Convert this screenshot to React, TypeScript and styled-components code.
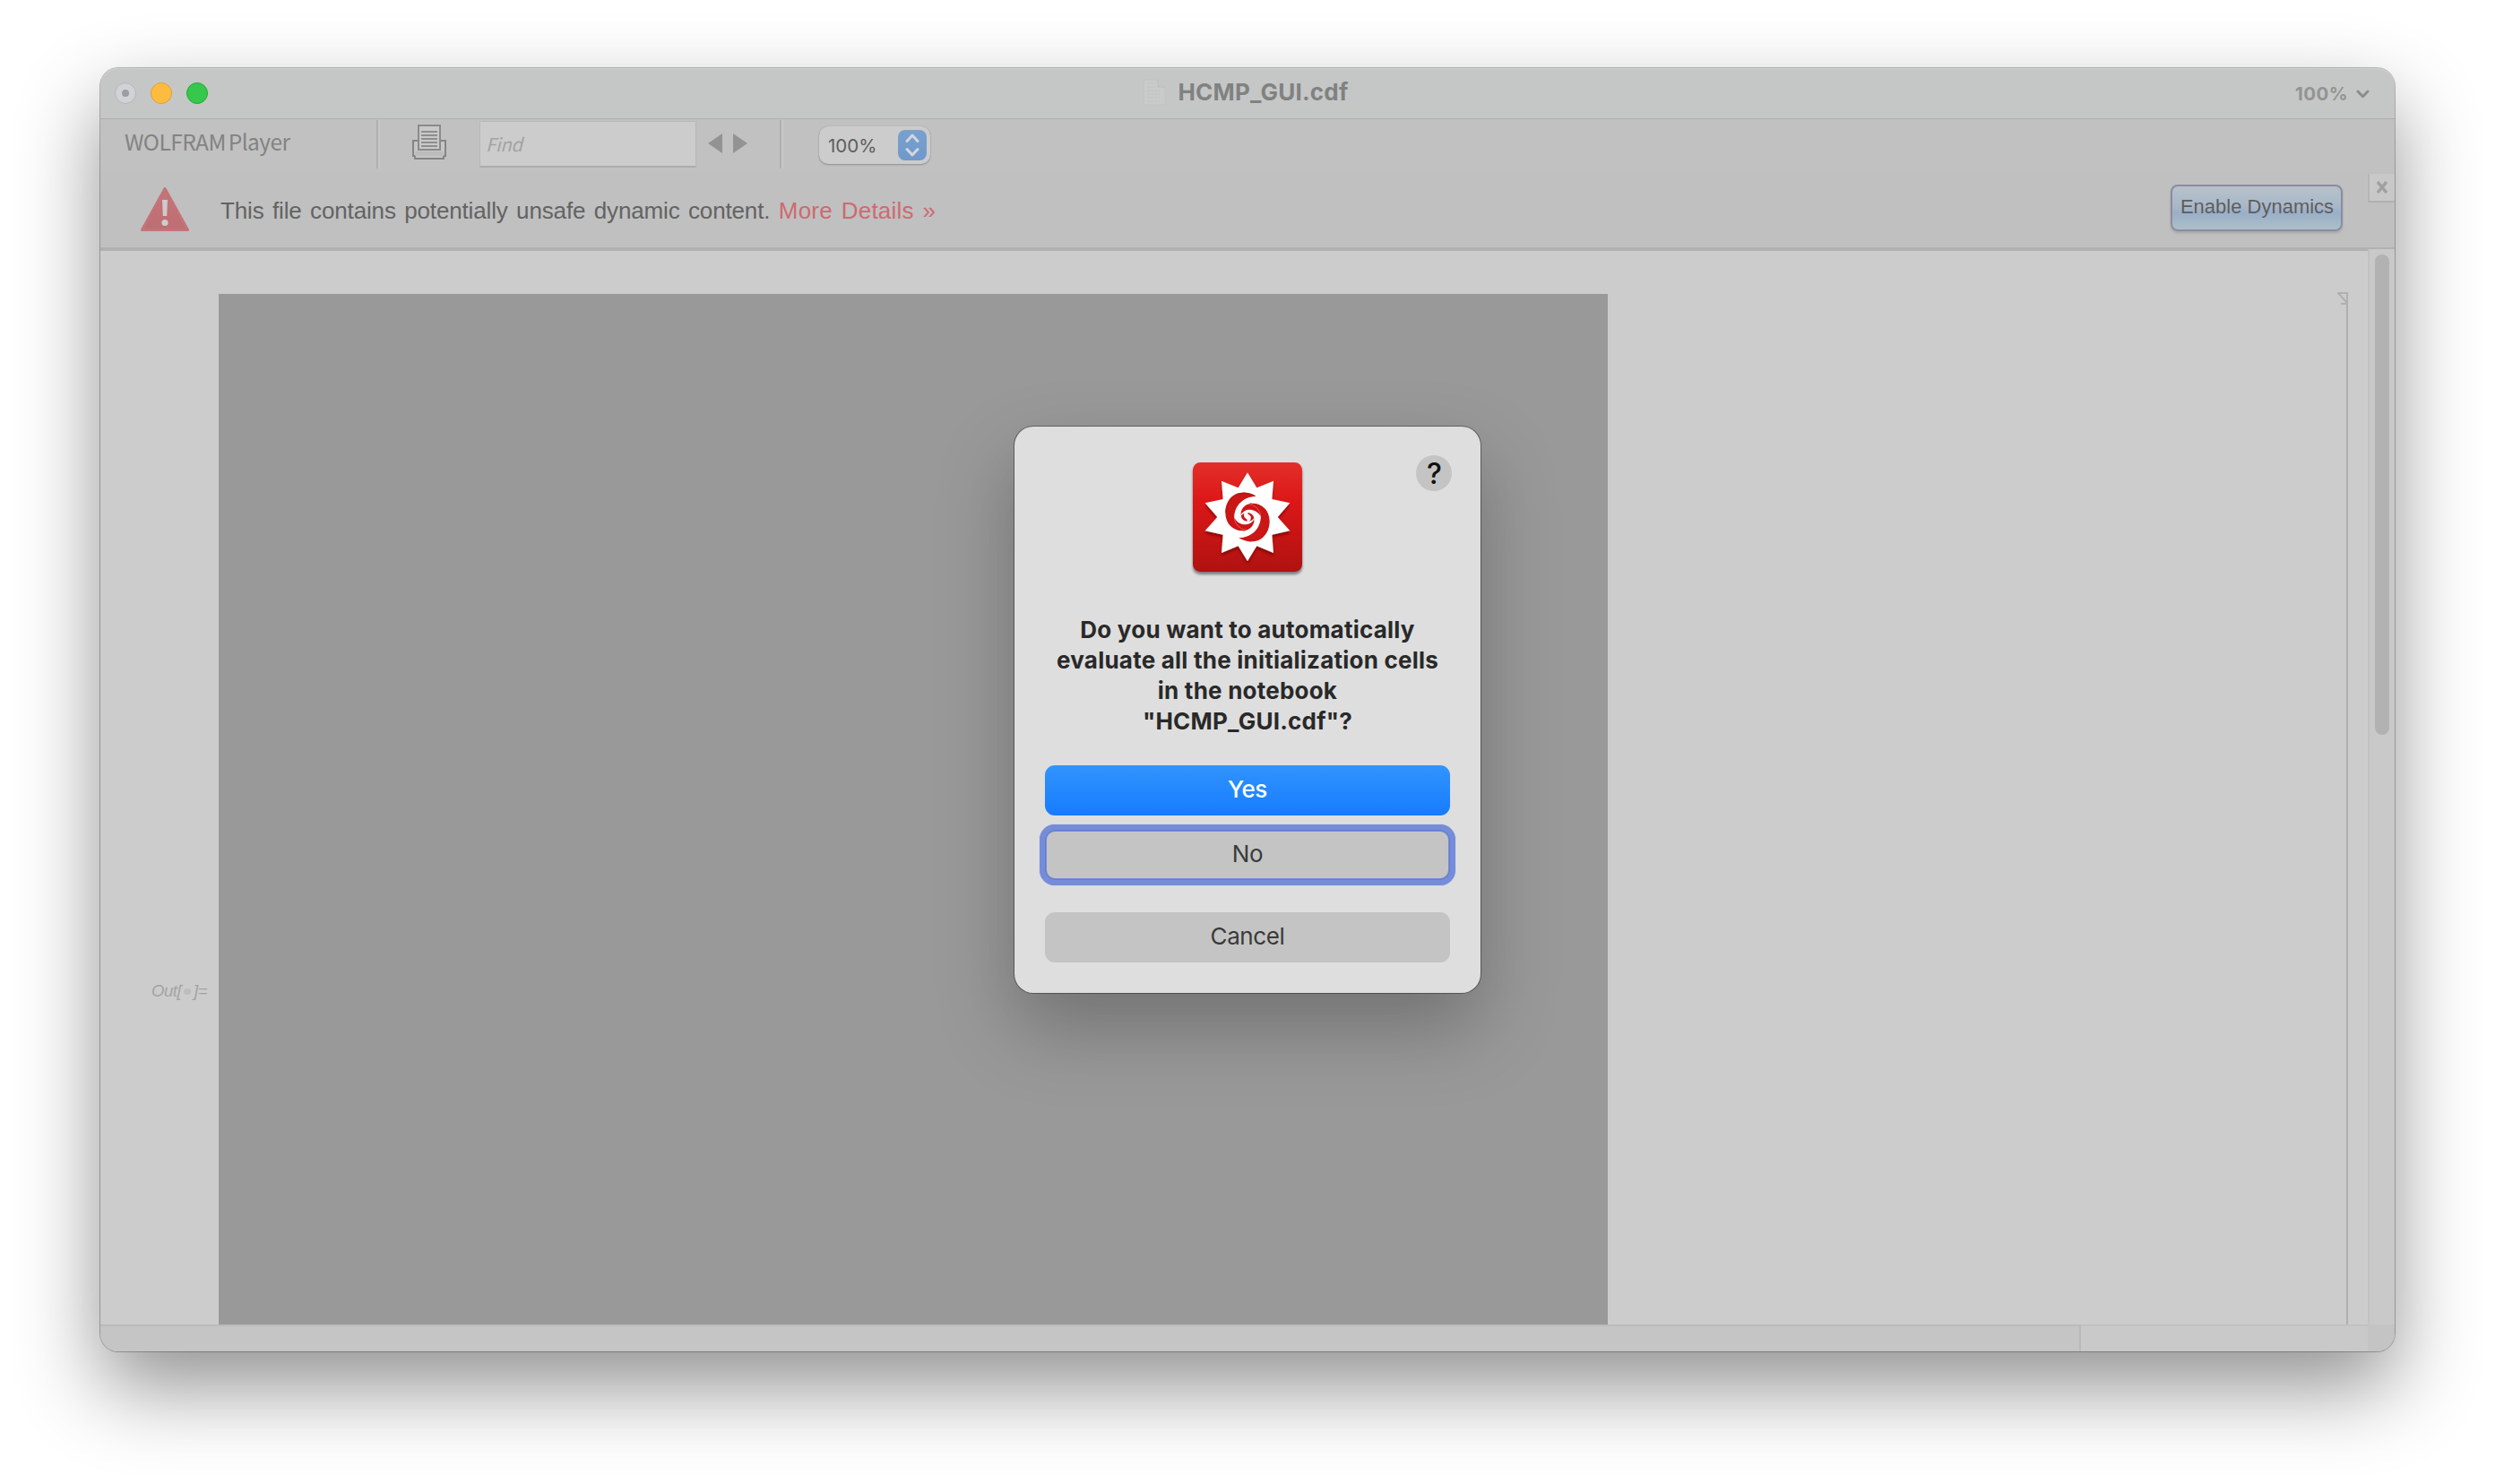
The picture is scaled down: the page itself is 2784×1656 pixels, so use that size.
import React from "react";
import styled, { createGlobalStyle, css } from "styled-components";

const Global = createGlobalStyle`
  *, *::before, *::after { box-sizing: border-box; }
  body { margin: 0; background: #fff; }
  button, input { font: inherit; margin: 0; }
  svg { display: block; flex: none; }
`;

const sans = `Inter, "Liberation Sans", sans-serif`;
const humanist = `"Noto Sans CJK SC", "Noto Sans", sans-serif`;
const grotesque = `"Liberation Sans", Arial, sans-serif`;

const Desktop = styled.div`
  width: 2784px;
  height: 1656px;
  padding: 76px 112px 148px;
  overflow: hidden;
  background: #fff;
`;

const Window = styled.main`
  position: relative;
  display: flex;
  flex-direction: column;
  width: 2560px;
  height: 1432px;
  border-radius: 20px;
  background: #ccc;
  box-shadow: 0 0 0 1px rgba(0, 0, 0, 0.26), 0 40px 92px rgba(0, 0, 0, 0.43);
`;

const TitleBar = styled.header`
  display: grid;
  grid-template-columns: 1fr auto 1fr;
  align-items: center;
  height: 57px;
  flex: none;
  padding: 0 28px 0 16px;
  border-radius: 20px 20px 0 0;
  border-bottom: 1px solid #adafae;
  background: #c5c7c6;
  box-shadow: inset 0 1px 0 #d0d2d1;
  font-family: ${sans};
`;

const Lights = styled.div`
  display: flex;
  gap: 16px;
`;

const Light = styled.span<{ $fill: string; $edge: string }>`
  display: grid;
  place-items: center;
  width: 24px;
  height: 24px;
  border-radius: 50%;
  border: 1px solid ${(p) => p.$edge};
  background: ${(p) => p.$fill};
`;

const EditedDot = styled.i`
  width: 8px;
  height: 8px;
  border-radius: 50%;
  background: #9c9da0;
`;

const Title = styled.h1`
  display: flex;
  align-items: center;
  gap: 13px;
  margin: 0;
  padding: 0 0 2px 8px;
  font-size: 26px;
  line-height: 32px;
  font-weight: 700;
  color: #808281;
  letter-spacing: 0.2px;
`;

const Magnification = styled.div`
  display: flex;
  align-items: center;
  justify-content: flex-end;
  gap: 9px;
  padding-top: 1px;
  font-size: 20.5px;
  font-weight: 700;
  letter-spacing: 0.4px;
  color: #929493;
`;

const Toolbar = styled.div`
  display: flex;
  align-items: flex-start;
  height: 59px;
  flex: none;
  background: #c1c1c1;
`;

const Brand = styled.span`
  width: 308px;
  padding: 7px 0 0 27px;
  font-family: ${humanist};
  font-size: 24.5px;
  line-height: 36px;
  letter-spacing: -0.55px;
  word-spacing: -2px;
  color: #838383;
  white-space: nowrap;
`;

const Divider = styled.span`
  width: 4px;
  height: 54px;
  margin-top: 1px;
  background: linear-gradient(90deg, #b0b0b0 50%, #c8c8c8 50%);
`;

const PrintButton = styled.span`
  margin: 6px 37px 0 36px;
`;

const Find = styled.div`
  width: 242px;
  height: 52px;
  margin-top: 2px;
  padding: 8px 6px;
  border: 1px solid #b8b8b8;
  border-bottom: 2px solid #adadad;
  background: #ccc;
  font-family: ${humanist};
  font-style: italic;
  font-size: 20.5px;
  line-height: 32px;
  letter-spacing: -0.4px;
  color: #a3a3a3;
`;

const Arrows = styled.span`
  display: flex;
  gap: 12px;
  margin: 16px 36px 0 13px;
`;

const ZoomSelect = styled.div`
  display: flex;
  align-items: center;
  justify-content: space-between;
  width: 124px;
  height: 42px;
  margin: 8px 0 0 40px;
  padding: 0 4px 0 10px;
  border-radius: 10px;
  background: #ccc;
  box-shadow: 0 1px 2px rgba(0, 0, 0, 0.25), 0 0 1px rgba(0, 0, 0, 0.2);
  font-family: ${sans};
  font-size: 20.5px;
  color: #5d5d5d;
`;

const Stepper = styled.span`
  display: grid;
  place-items: center;
  width: 32px;
  height: 34px;
  border-radius: 8px;
  background: linear-gradient(#78a1cf, #7098cb);
`;

const Warning = styled.section`
  display: flex;
  align-items: flex-start;
  height: 88px;
  flex: none;
  border-bottom: 4px solid #b1b1b1;
  background: #c0c0c0;
  font-family: ${grotesque};
`;

const WarningMark = styled.span`
  margin: 16px 34px 0 44px;
`;

const WarningText = styled.p`
  flex: 1;
  margin: 27px 0 0;
  font-size: 26px;
  line-height: 32px;
  word-spacing: 2.4px;
  letter-spacing: -0.15px;
  color: #636363;
`;

const Details = styled.a`
  letter-spacing: 0.22px;
  color: #cd6a70;
`;

const EnableButton = styled.button`
  width: 192px;
  height: 52px;
  margin: 14px 28px 0 0;
  padding: 0 0 2px 1px;
  border: 2px solid #8a8d9f;
  border-radius: 8px;
  background: linear-gradient(#b7c1c9 0%, #a9b8c9 45%, #9aafc8 62%, #adbfc9 100%);
  box-shadow: 0 2px 3px rgba(0, 0, 0, 0.15);
  font-family: ${grotesque};
  font-size: 22px;
  white-space: nowrap;
  color: #5e5e5e;
`;

const CloseBox = styled.span`
  display: grid;
  place-items: center;
  width: 30px;
  height: 32px;
  margin-top: 2px;
  border-left: 2px solid #b5b5b5;
  border-bottom: 2px solid #b0b0b0;
  background: #c8c8c8;
`;

const Body = styled.div`
  display: flex;
  height: 1198px;
  flex: none;
`;

const Notebook = styled.div`
  display: flex;
  align-items: flex-start;
  flex: 1;
  padding-top: 48px;
  background: #ccc;
`;

const OutLabel = styled.span`
  display: flex;
  align-items: center;
  justify-content: flex-end;
  width: 132px;
  margin-top: 764px;
  padding-right: 13px;
  font-family: ${grotesque};
  font-style: italic;
  font-size: 18.5px;
  line-height: 28px;
  letter-spacing: -0.5px;
  color: #a3a3a3;
`;

const OutDot = styled.i`
  width: 8px;
  height: 7px;
  margin: 0 3px;
  border-radius: 50%;
  background: #bdbdbd;
`;

const Canvas = styled.div`
  width: 1550px;
  height: 1150px;
  background: #999;
`;

const Bracket = styled.span`
  margin: -2px 22px 0 auto;
`;

const VerticalTrack = styled.div`
  width: 30px;
  margin-top: -2px;
  padding: 6px 6px;
  border-left: 2px solid #c2c2c2;
  background: #c9c9c9;
`;

const VerticalThumb = styled.div`
  width: 16px;
  height: 536px;
  border-radius: 8px;
  background: #b2b2b2;
`;

const Footer = styled.div`
  display: flex;
  height: 30px;
  flex: none;
  border-radius: 0 0 20px 20px;
  overflow: hidden;
`;

const FooterPart = styled.div<{ $width: number; $kind: "thumb" | "track" | "corner" }>`
  width: ${(p) => p.$width}px;
  ${(p) =>
    p.$kind === "thumb" &&
    css`
      border-top: 2px solid #bbb;
      border-right: 2px solid #bababa;
      background: #c5c5c5;
    `}
  ${(p) =>
    p.$kind === "track" &&
    css`
      border-top: 2px solid #c2c2c2;
      background: #c9c9c9;
    `}
  ${(p) =>
    p.$kind === "corner" &&
    css`
      background: #c4c4c4;
    `}
`;

const Dialog = styled.div`
  position: absolute;
  left: 1020px;
  top: 400px;
  display: flex;
  flex-direction: column;
  align-items: center;
  width: 520px;
  height: 632px;
  padding: 40px 34px 34px;
  border-radius: 21px;
  background: #dedede;
  box-shadow: 0 0 0 1px rgba(0, 0, 0, 0.35), 0 38px 86px rgba(0, 0, 0, 0.26);
  font-family: ${sans};
`;

const Help = styled.button`
  position: absolute;
  top: 32px;
  right: 32px;
  width: 40px;
  height: 40px;
  padding: 1px 0 0 1px;
  border: 0;
  border-radius: 50%;
  background: #c4c4c4;
  font-family: ${sans};
  font-size: 32px;
  font-weight: 500;
  line-height: 40px;
  color: #111;
`;

const AppIcon = styled.span`
  filter: drop-shadow(0 3px 1.5px rgba(0, 0, 0, 0.45));
`;

const Message = styled.h2`
  margin: 48px 0 0;
  font-size: 26px;
  line-height: 34px;
  font-weight: 700;
  letter-spacing: 0.22px;
  text-align: center;
  white-space: nowrap;
  color: #292929;
`;

const DialogButton = styled.button<{ $kind?: "primary" | "focused"; $gap: number }>`
  width: 452px;
  height: 56px;
  flex: none;
  margin-top: ${(p) => p.$gap}px;
  padding: 0 0 3px;
  border: 0;
  border-radius: 11px;
  background: #c4c4c4;
  font-family: ${sans};
  font-size: 26px;
  letter-spacing: -0.4px;
  color: #3a3a3a;
  ${(p) =>
    p.$kind === "primary" &&
    css`
      background: linear-gradient(#3294fc, #167cff);
      font-weight: 500;
      color: #fff;
    `}
  ${(p) =>
    p.$kind === "focused" &&
    css`
      box-shadow: inset 0 0 0 1px #657dcb, inset 0 0 0 2px #758cda, 0 0 0 6px #758cda, 0 0 1px 6px #758cda;
    `}
`;

const DocumentIcon = () => (
  <svg width="26" height="30" viewBox="0 0 26 30">
    <path d="M1 1H17L25 9V29H1Z" fill="#c9cbca" stroke="#c0c2c1" />
    <path d="M17 1V9H25" fill="#c4c6c5" stroke="#bcbebd" />
    <path d="M5 5H14M5 9H14M5 13H20M5 17H20M5 21H20M5 25H18" stroke="#bfc1c0" strokeDasharray="3 1" />
  </svg>
);

const Printer = () => (
  <svg width="38" height="39" viewBox="0 0 38 39" fill="none">
    <path d="M1 18H37V35H35V38H3V35H1Z" fill="#c6c6c6" stroke="#858585" strokeWidth="2" />
    <path d="M3 30H35V35H3Z" fill="#bcbcbc" />
    <path d="M7 1H31V28H7Z" fill="#c9c9c9" stroke="#8b8b8b" strokeWidth="2" />
    <path d="M10 8H28M10 12H28M10 16H28M10 20H28M10 24H28" stroke="#8e8e8e" strokeWidth="2" />
  </svg>
);

const AlertTriangle = () => (
  <svg width="56" height="52" viewBox="0 0 56 52">
    <defs>
      <linearGradient id="alert" x1="0" y1="0" x2="0" y2="1">
        <stop offset="0" stopColor="#c77478" />
        <stop offset="1" stopColor="#bd6e72" />
      </linearGradient>
    </defs>
    <path d="M28 2.5L53.5 48.5H2.5Z" fill="url(#alert)" stroke="#c37479" strokeWidth="3" strokeLinejoin="round" />
    <path d="M25 15H31L30.2 33H25.8Z" fill="#ccc" />
    <circle cx="28" cy="40.5" r="3.6" fill="#ccc" />
  </svg>
);

const redSwirl =
  "M335 191C315 180 300 178 288 179C252 182 232 214 232 247C232 284 258 308 290 307L310 290L306 236L322 215L300 205Z";
const whiteArm =
  "M335 191C292 193 261 222 262 264C272 280 285 286 300 286C316 285 328 274 330 262C326 269 317 276 307 276C290 275 282 263 284 247C287 228 301 217 324 213Z";
const curl =
  "M308 236C296 240 291 252 296 262C299 268 304 266 305 272C306 276 303 277 300 277C312 279 319 270 317 260C315 252 308 254 307 248C307 245 309 244 312 244Z";

const Spikey = () => (
  <svg width="122" height="122" viewBox="123 78 366 366">
    <defs>
      <linearGradient id="tile" gradientUnits="userSpaceOnUse" x1="0" y1="78" x2="0" y2="444">
        <stop offset="0" stopColor="#e23029" />
        <stop offset="0.35" stopColor="#dd1717" />
        <stop offset="1" stopColor="#af1210" />
      </linearGradient>
      <filter id="lift" x="-10%" y="-10%" width="120%" height="130%">
        <feDropShadow dx="0" dy="9" stdDeviation="4" floodColor="#5c0505" floodOpacity="0.55" />
      </filter>
    </defs>
    <rect x="123" y="78" width="366" height="366" rx="25" fill="url(#tile)" />
    <path
      filter="url(#lift)"
      fill="#fff"
      d="M306 112L337 163L393 140L388 201L448 214L407 261L448 307L388 320L393 381L337 358L306 409L275 358L219 381L224 320L164 307L205 261L164 214L224 201L219 140L275 163Z"
    />
    <g fill="#cb1616">
      <path d={redSwirl} />
      <path d={redSwirl} transform="rotate(180 306 261)" />
      <circle cx="306" cy="261" r="40" />
    </g>
    <path d="M234 247C234 214 252 182 288 181C300 180 315 182 331 191" fill="none" stroke="#a30f0f" strokeWidth="5" opacity="0.5" />
    <circle cx="306" cy="261" r="44" fill="none" stroke="#ee9a98" strokeWidth="1.5" />
    <g fill="#fff">
      <path d={whiteArm} />
      <path d={whiteArm} transform="rotate(180 306 261)" />
      <path d={curl} />
    </g>
  </svg>
);

export default function App() {
  return (
    <Desktop>
      <Global />
      <Window>
        <TitleBar>
          <Lights>
            <Light $fill="#d1d2d6" $edge="#b4b5b8">
              <EditedDot />
            </Light>
            <Light $fill="#fdbc40" $edge="#df9f38" />
            <Light $fill="#35c84a" $edge="#26a935" />
          </Lights>
          <Title>
            <DocumentIcon />
            HCMP_GUI.cdf
          </Title>
          <Magnification>
            100%
            <svg width="15" height="10" viewBox="0 0 15 10" fill="none" stroke="#8b8d8c" strokeWidth="3" strokeLinecap="round" strokeLinejoin="round">
              <path d="M2 2L7.5 7.7L13 2" />
            </svg>
          </Magnification>
        </TitleBar>

        <Toolbar>
          <Brand>WOLFRAM Player</Brand>
          <Divider />
          <PrintButton>
            <Printer />
          </PrintButton>
          <Find>Find</Find>
          <Arrows>
            <svg width="16" height="22" viewBox="0 0 16 22" fill="#939393">
              <path d="M16 0V22L0 11Z" />
            </svg>
            <svg width="16" height="22" viewBox="0 0 16 22" fill="#939393">
              <path d="M0 0V22L16 11Z" />
            </svg>
          </Arrows>
          <Divider />
          <ZoomSelect>
            100%
            <Stepper>
              <svg width="16" height="26" viewBox="0 0 16 26" fill="none" stroke="#d3d7dc" strokeWidth="3" strokeLinecap="round" strokeLinejoin="round">
                <path d="M2 8.5L8 2L14 8.5M2 17.5L8 24L14 17.5" />
              </svg>
            </Stepper>
          </ZoomSelect>
        </Toolbar>

        <Warning>
          <WarningMark>
            <AlertTriangle />
          </WarningMark>
          <WarningText>
            This file contains potentially unsafe dynamic content. <Details>More Details »</Details>
          </WarningText>
          <EnableButton>Enable Dynamics</EnableButton>
          <CloseBox>
            <svg width="12" height="14" viewBox="0 0 12 14" stroke="#a0a0a0" strokeWidth="3.4">
              <path d="M1 1L11 13M11 1L1 13" />
            </svg>
          </CloseBox>
        </Warning>

        <Body>
          <Notebook>
            <OutLabel>
              Out[
              <OutDot />
              ]=
            </OutLabel>
            <Canvas />
            <Bracket>
              <svg width="12" height="1152" viewBox="0 0 12 1152" fill="none" stroke="#b0b0b0" strokeWidth="2">
                <path d="M0 1H11V1152M1 1L11 12M4 13H11" />
              </svg>
            </Bracket>
          </Notebook>
          <VerticalTrack>
            <VerticalThumb />
          </VerticalTrack>
        </Body>

        <Footer>
          <FooterPart $width={2210} $kind="thumb" />
          <FooterPart $width={320} $kind="track" />
          <FooterPart $width={30} $kind="corner" />
        </Footer>

        <Dialog role="dialog">
          <Help>?</Help>
          <AppIcon>
            <Spikey />
          </AppIcon>
          <Message>
            Do you want to automatically
            <br />
            evaluate all the initialization cells
            <br />
            in the notebook
            <br />
            "HCMP_GUI.cdf"?
          </Message>
          <DialogButton $kind="primary" $gap={32}>
            Yes
          </DialogButton>
          <DialogButton $kind="focused" $gap={16}>
            No
          </DialogButton>
          <DialogButton $gap={36}>Cancel</DialogButton>
        </Dialog>
      </Window>
    </Desktop>
  );
}
